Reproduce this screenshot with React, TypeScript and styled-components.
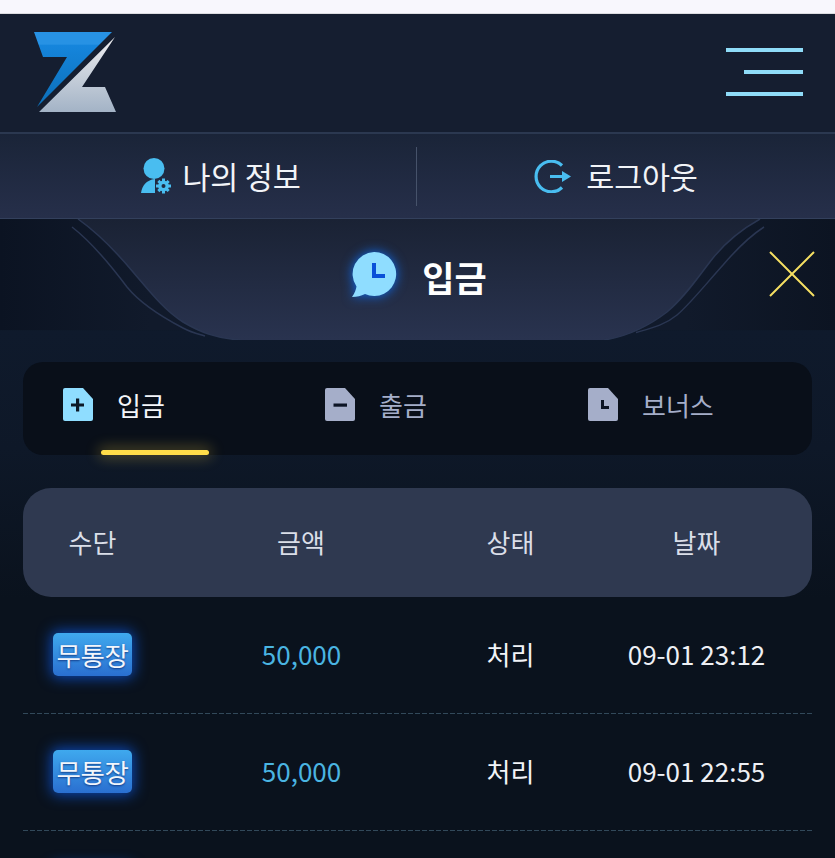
import React from 'react';
import styled, { createGlobalStyle } from 'styled-components';

const GlobalStyle = createGlobalStyle`
  html, body {
    margin: 0;
    padding: 0;
    background: #f8f7fd;
  }
  * {
    box-sizing: border-box;
  }
`;

const Page = styled.div`
  width: 835px;
  height: 858px;
  overflow: hidden;
  display: flex;
  flex-direction: column;
  font-family: 'Noto Sans CJK KR', 'Noto Sans', sans-serif;
  color: #fff;
`;

const StatusStrip = styled.div`
  height: 14px;
  flex: none;
  background: #f8f7fd;
  border-bottom: 1px solid #dcdce0;
`;

const Header = styled.header`
  height: 118px;
  flex: none;
  display: flex;
  align-items: center;
  justify-content: space-between;
  padding: 0 32px 2px 33px;
  background: #151e30;
`;

const Burger = styled.div`
  width: 77px;
  display: flex;
  flex-direction: column;
  align-items: flex-end;
  gap: 18px;
`;

const BurgerLine = styled.span<{ $w: number }>`
  display: block;
  height: 4px;
  width: ${(p) => p.$w}px;
  background: #8fdcf8;
`;

const UserNav = styled.nav`
  height: 87px;
  flex: none;
  display: grid;
  grid-template-columns: 416px 419px;
  align-items: center;
  background: linear-gradient(180deg, #1a2438 0%, #262f4a 100%);
  border-top: 2px solid #2b3850;
  border-bottom: 1px solid #33405c;
`;

const NavItem = styled.div<{ $gap: number; $left?: number; $right?: number }>`
  height: 59px;
  display: flex;
  align-items: center;
  justify-content: center;
  gap: ${(p) => p.$gap}px;
  padding-left: ${(p) => p.$left ?? 0}px;
  padding-right: ${(p) => p.$right ?? 0}px;
  font-size: 30.5px;
  letter-spacing: -0.2px;
  color: #f2f4f8;

  & + & {
    border-left: 1px solid #46526a;
  }
`;

const Main = styled.main`
  flex: 1;
  padding: 0 23px;
  background: linear-gradient(
    180deg,
    #0b1320 0,
    #0d1727 110px,
    #0f1a2c 112px,
    #0e1828 230px,
    #0a121d 380px,
    #0a121d 100%
  );
`;

const TitleBar = styled.div`
  position: relative;
  height: 121px;
  margin: 0 -23px;
  display: flex;
  align-items: center;
  justify-content: center;
  gap: 25px;
  padding-left: 3px;
  padding-bottom: 10px;
`;

const TitleShape = styled.svg`
  position: absolute;
  inset: 0;
  width: 100%;
  height: 100%;
`;

const TitleIcon = styled.svg`
  position: relative;
  width: 46px;
  height: 46px;
  filter: drop-shadow(0 0 6px #0f6df0);
`;

const TitleText = styled.h1`
  position: relative;
  margin: 3px 0 0;
  font-size: 35px;
  font-weight: 700;
  line-height: 1;
`;

const CloseIcon = styled.svg`
  position: absolute;
  top: 32px;
  right: 20px;
  width: 46px;
  height: 46px;
`;

const Tabs = styled.div`
  margin-top: 22px;
  height: 93px;
  display: grid;
  grid-template-columns: 262px 263px 264px;
  background: #090f19;
  border-radius: 20px;
`;

const Tab = styled.div<{ $active?: boolean }>`
  position: relative;
  display: flex;
  align-items: center;
  gap: 24px;
  padding-left: 40px;
  padding-bottom: 8px;
  font-size: 26px;
  color: ${(p) => (p.$active ? '#f4f6fa' : '#a5aec9')};

  ${(p) =>
    p.$active &&
    `
    &::after {
      content: '';
      position: absolute;
      left: 78px;
      bottom: 0;
      width: 108px;
      height: 5px;
      border-radius: 3px;
      background: #ffdd4a;
      box-shadow: 0 0 14px 3px rgba(255, 214, 70, 0.28);
    }
  `}
`;

const TabIcon = styled.svg`
  width: 30px;
  height: 33px;
  flex: none;
`;

const TableHead = styled.div`
  margin-top: 33px;
  height: 109px;
  padding-bottom: 3px;
  display: grid;
  grid-template-columns: 139px 278px 141px 231px;
  align-items: center;
  background: #2f3950;
  border-radius: 28px;
  font-size: 26px;
  color: #dadee8;
  text-align: center;
`;

const Row = styled.div`
  height: 117px;
  padding-bottom: 3px;
  display: grid;
  grid-template-columns: 139px 278px 141px 231px;
  align-items: center;
  text-align: center;
  background: repeating-linear-gradient(90deg, #32495a 0 5px, transparent 5px 7px) left bottom / 100% 1px no-repeat;
`;

const MethodBadge = styled.span`
  justify-self: center;
  width: 79px;
  height: 43px;
  margin-top: 1px;
  display: flex;
  align-items: center;
  justify-content: center;
  border-radius: 5px;
  font-size: 26.5px;
  letter-spacing: -0.4px;
  color: #f2f6fc;
  white-space: nowrap;
  background: linear-gradient(180deg, #3fa9ee 0%, #2a6fd0 100%);
  box-shadow: 0 0 14px 2px rgba(12, 90, 230, 0.75);
  text-shadow: 0 1px 2px rgba(10, 40, 110, 0.8);
`;

const Amount = styled.span`
  font-size: 26px;
  margin-top: -1px;
  padding-left: 1px;
  color: #4ab5e2;
`;

const Status = styled.span`
  font-size: 26px;
  margin-top: -1px;
  color: #f2f4f8;
`;

const DateCell = styled.span`
  font-size: 26px;
  margin-top: -1px;
  color: #eef0f5;
`;

const Logo = () => (
  <svg width="84" height="80" viewBox="0 0 84 80" aria-hidden="true">
    <defs>
      <linearGradient id="zBlue" x1="0" y1="0" x2="0" y2="1">
        <stop offset="0" stopColor="#2792e4" />
        <stop offset="0.16" stopColor="#2792e4" />
        <stop offset="0.18" stopColor="#1585dc" />
        <stop offset="1" stopColor="#0c6fb8" />
      </linearGradient>
      <linearGradient id="zGrey" x1="0" y1="0" x2="0" y2="1">
        <stop offset="0" stopColor="#eeeef0" />
        <stop offset="1" stopColor="#a3b3c6" />
      </linearGradient>
    </defs>
    <path d="M1 0H79L4 75 34 25H10Z" fill="url(#zBlue)" />
    <path d="M82 5L49 55H72L83 80H6Z" fill="url(#zGrey)" />
  </svg>
);

const UserGearIcon = () => (
  <svg width="31" height="36" viewBox="0 0 31 36" aria-hidden="true">
    <circle cx="13" cy="10.5" r="10.5" fill="#49bdf0" />
    <path d="M0 35C1 28 5 22 14 21V35Z" fill="#49bdf0" />
    <g fill="#49bdf0">
      <circle cx="22.5" cy="28" r="5.4" />
      <path d="M21 20.5h3v3h-3zM21 32.5h3v3h-3zM15 26.5h3v3h-3zM27 26.5h3v3h-3z" />
      <path d="M16.3 23.9l2.1-2.1 2.1 2.1-2.1 2.1zM24.5 32l2.1-2.1 2.1 2.1-2.1 2.1zM16.3 32.1l2.1-2.1 2.1 2.1-2.1 2.1zM24.5 24l2.1-2.1 2.1 2.1-2.1 2.1z" />
    </g>
    <circle cx="22.5" cy="28" r="2" fill="#1f2940" />
  </svg>
);

const LogoutIcon = () => (
  <svg width="37" height="33" viewBox="0 0 37 33" fill="none" aria-hidden="true">
    <path d="M28 5.5A15.3 15.3 0 1 0 28 27.5" stroke="#49bdf0" strokeWidth="3.2" />
    <path d="M16 15H29V18H16Z" fill="#49bdf0" />
    <path d="M28 11L37 16.5 28 22Z" fill="#49bdf0" />
  </svg>
);

const ChatClockIcon = () => (
  <TitleIcon viewBox="0 0 46 46" aria-hidden="true">
    <path d="M23 0a22 22 0 1 1-9 42C10 44 6 45 1 45 4 41 5 37 5.5 34.5A22 22 0 0 1 23 0Z" fill="#8fddff" />
    <path d="M21 11H25V22H34V26H21Z" fill="#0a50d8" />
  </TitleIcon>
);

const FileIcon = ({ kind, color, mark }: { kind: 'plus' | 'minus' | 'clock'; color: string; mark: string }) => (
  <TabIcon viewBox="0 0 30 33" aria-hidden="true">
    <path d="M2 0H20L30 11V31a2 2 0 0 1-2 2H2a2 2 0 0 1-2-2V2a2 2 0 0 1 2-2Z" fill={color} />
    {kind === 'plus' && <path d="M13 10.5H16.2V15.4H21V18.6H16.2V23.5H13V18.6H8V15.4H13Z" fill={mark} />}
    {kind === 'minus' && <path d="M8.5 15.5H22V18.7H8.5Z" fill={mark} />}
    {kind === 'clock' && <path d="M13 12H16V18H21V21H13Z" fill={mark} />}
  </TabIcon>
);

const deposits = [
  { amount: '50,000', status: '처리', date: '09-01 23:12' },
  { amount: '50,000', status: '처리', date: '09-01 22:55' },
];

const App: React.FC = () => {
  return (
    <Page>
      <GlobalStyle />
      <StatusStrip />
      <Header>
        <Logo />
        <Burger>
          <BurgerLine $w={77} />
          <BurgerLine $w={59} />
          <BurgerLine $w={77} />
        </Burger>
      </Header>
      <UserNav>
        <NavItem $gap={10} $left={26}>
          <UserGearIcon />
          나의 정보
        </NavItem>
        <NavItem $gap={15} $right={20}>
          <LogoutIcon />
          로그아웃
        </NavItem>
      </UserNav>
      <Main>
        <TitleBar>
          <TitleShape viewBox="0 0 835 121" preserveAspectRatio="none" aria-hidden="true">
            <defs>
              <linearGradient id="titleFill" x1="0" y1="0" x2="0" y2="1">
                <stop offset="0" stopColor="#1a2234" />
                <stop offset="1" stopColor="#29334f" />
              </linearGradient>
              <linearGradient id="titleCorners" x1="0" y1="0" x2="1" y2="0">
                <stop offset="0" stopColor="#0b1322" />
                <stop offset="0.18" stopColor="#111a2b" />
                <stop offset="0.82" stopColor="#111a2b" />
                <stop offset="1" stopColor="#0c1422" />
              </linearGradient>
            </defs>
            <rect x="0" y="0" width="835" height="111" fill="url(#titleCorners)" />
            <path
              d="M78 0C92 10 113 29 133 53C150 73 165 92 183 103C200 113 215 119 240 121H604C630 117 650 106 667 93C685 78 698 58 713 39C725 24 742 10 760 0Z"
              fill="url(#titleFill)"
            />
            <g fill="none" stroke="#2a3652" strokeWidth="1.5">
              <path d="M78 0C92 10 113 29 133 53C150 73 165 92 183 103C200 113 215 119 240 121" />
              <path d="M72 8C85 18 103 36 127 68C140 84 160 97 183 109C190 113 198 115 205 117" />
              <path d="M604 121C630 117 650 106 667 93C685 78 698 58 713 39C725 24 742 10 760 0" />
              <path d="M636 113.5C652 109 665 106 677 96C690 85 705 66 723 46C735 32 750 17 764 8" />
            </g>
          </TitleShape>
          <ChatClockIcon />
          <TitleText>입금</TitleText>
          <CloseIcon viewBox="0 0 46 46" fill="none" aria-hidden="true">
            <path d="M1 1L45 45M45 1L1 45" stroke="#f5df62" strokeWidth="2" />
          </CloseIcon>
        </TitleBar>

        <Tabs>
          <Tab $active>
            <FileIcon kind="plus" color="#8fddff" mark="#0c1826" />
            입금
          </Tab>
          <Tab>
            <FileIcon kind="minus" color="#a5aec9" mark="#0c1424" />
            출금
          </Tab>
          <Tab>
            <FileIcon kind="clock" color="#a5aec9" mark="#0c1424" />
            보너스
          </Tab>
        </Tabs>

        <TableHead>
          <span>수단</span>
          <span>금액</span>
          <span>상태</span>
          <span>날짜</span>
        </TableHead>

        {deposits.map((item) => (
          <Row key={item.date}>
            <MethodBadge>무통장</MethodBadge>
            <Amount>{item.amount}</Amount>
            <Status>{item.status}</Status>
            <DateCell>{item.date}</DateCell>
          </Row>
        ))}
        {/* next row starts below the fold, only the badge glow shows */}
        <Row>
          <MethodBadge />
        </Row>
      </Main>
    </Page>
  );
};

export default App;
